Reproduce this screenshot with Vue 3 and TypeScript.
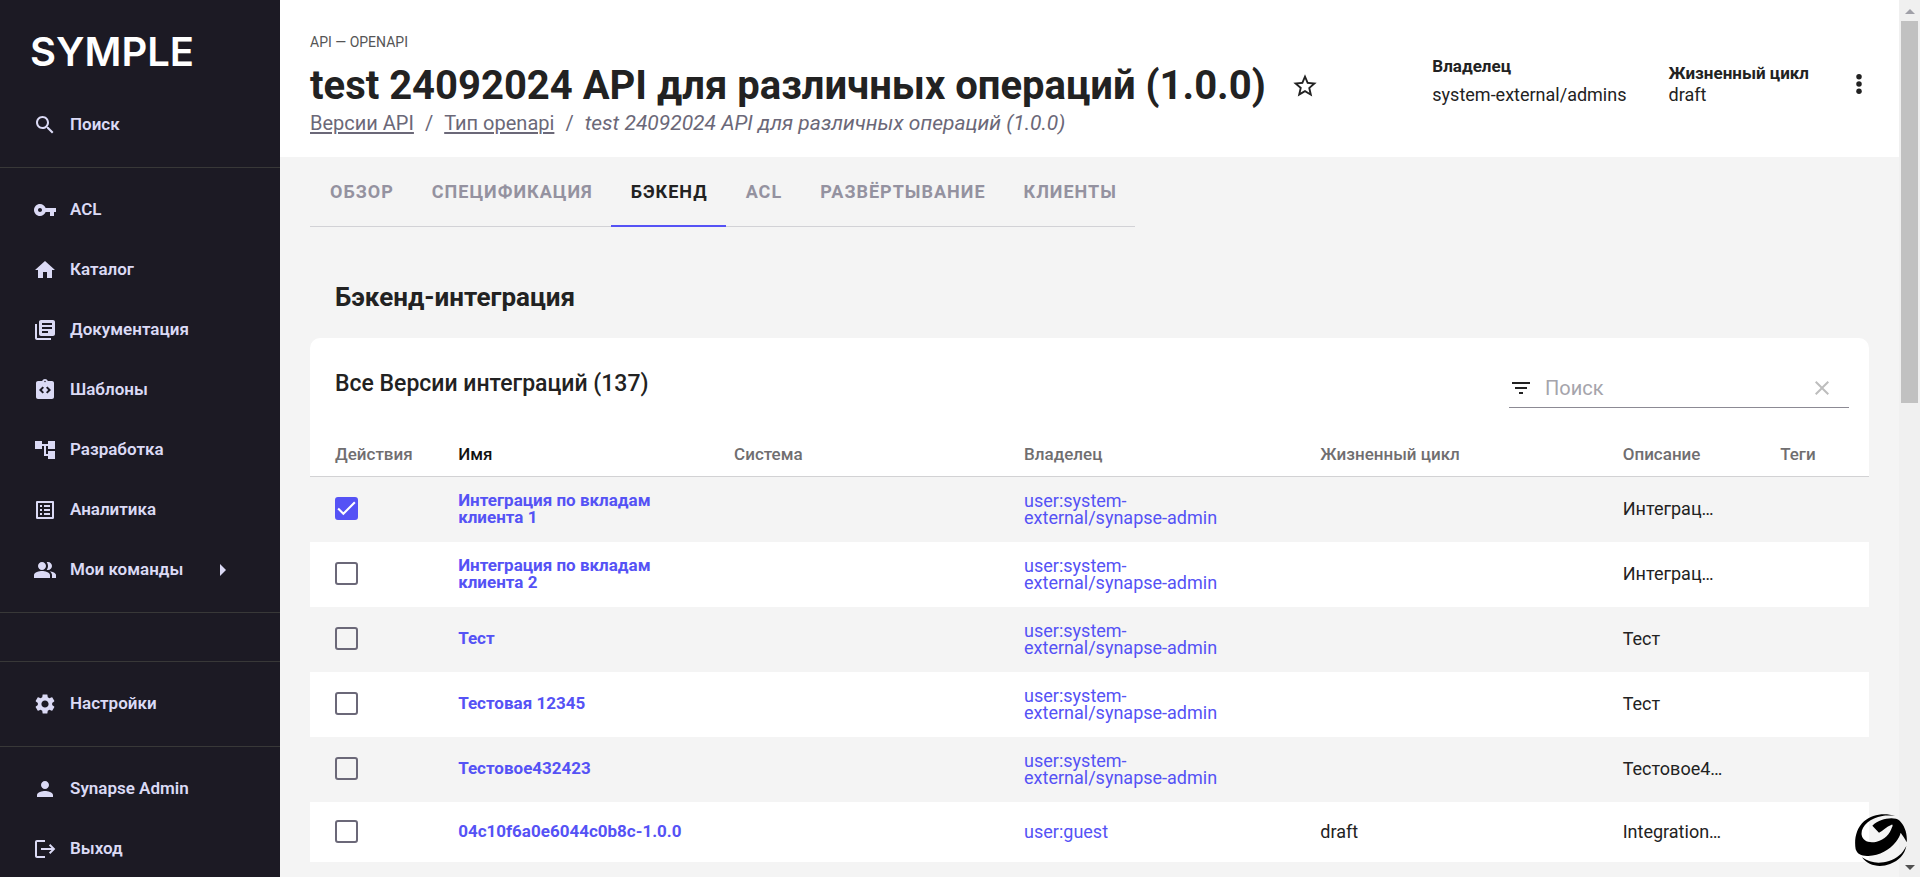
<script setup lang="ts">
import { ref } from 'vue'

interface NavItem {
  label: string
  icon: string
  submenu?: boolean
}

interface Row {
  name: string
  owner: string
  lifecycle: string
  description: string
  checked: boolean
}

const icons = {
  search:
    'M15.5 14h-.79l-.28-.27C15.41 12.59 16 11.11 16 9.5 16 5.91 13.09 3 9.5 3S3 5.91 3 9.5 5.91 16 9.5 16c1.61 0 3.09-.59 4.23-1.57l.27.28v.79l5 4.99L20.49 19l-4.99-5zm-6 0C7.01 14 5 11.99 5 9.5S7.01 5 9.5 5 14 7.01 14 9.5 11.99 14 9.5 14z',
  key: 'M12.65 10C11.83 7.67 9.61 6 7 6c-3.31 0-6 2.69-6 6s2.69 6 6 6c2.61 0 4.83-1.67 5.65-4H17v4h4v-4h2v-4H12.65zM7 14c-1.1 0-2-.9-2-2s.9-2 2-2 2 .9 2 2-.9 2-2 2z',
  home: 'M10 20v-6h4v6h5v-8h3L12 3 2 12h3v8z',
  docs: 'M4 6H2v14c0 1.1.9 2 2 2h14v-2H4V6zm16-4H8c-1.1 0-2 .9-2 2v12c0 1.1.9 2 2 2h12c1.1 0 2-.9 2-2V4c0-1.1-.9-2-2-2zm-1 9H9V9h10v2zm-4 4H9v-2h6v2zm4-8H9V5h10v2z',
  templates:
    'M19 3h-4.18C14.4 1.84 13.3 1 12 1s-2.4.84-2.82 2H5c-1.1 0-2 .9-2 2v14c0 1.1.9 2 2 2h14c1.1 0 2-.9 2-2V5c0-1.1-.9-2-2-2zm-8 11.17L9.59 15.6 6 12l3.59-3.6L11 9.83 8.83 12 11 14.17zM12 4.25c-.41 0-.75-.34-.75-.75s.34-.75.75-.75.75.34.75.75-.34.75-.75.75zm2.41 11.35L13 14.17 15.17 12 13 9.83l1.41-1.43L18 12l-3.59 3.6z',
  tree: 'M22 11V3h-7v3H9V3H2v8h7V8h2v10h4v3h7v-8h-7v3h-2V8h2v3z',
  list: 'M19 5v14H5V5h14m1.1-2H3.9c-.5 0-.9.4-.9.9v16.2c0 .4.4.9.9.9h16.2c.4 0 .9-.5.9-.9V3.9c0-.5-.5-.9-.9-.9zM11 7h6v2h-6V7zm0 4h6v2h-6v-2zm0 4h6v2h-6v-2zM7 7h2v2H7V7zm0 4h2v2H7v-2zm0 4h2v2H7v-2z',
  people:
    'M16.67 13.13C18.04 14.06 19 15.32 19 17v3h4v-3c0-2.18-3.57-3.47-6.33-3.87zM15 12c2.21 0 4-1.79 4-4s-1.79-4-4-4c-.47 0-.91.1-1.33.24C14.5 5.27 15 6.58 15 8s-.5 2.73-1.33 3.76c.42.14.86.24 1.33.24zM9 12c2.21 0 4-1.79 4-4s-1.79-4-4-4-4 1.79-4 4 1.79 4 4 4zm0 1c-2.67 0-8 1.34-8 4v3h16v-3c0-2.66-5.33-4-8-4z',
  settings:
    'M19.14 12.94c.04-.3.06-.61.06-.94 0-.32-.02-.64-.07-.94l2.03-1.58c.18-.14.23-.41.12-.61l-1.92-3.32c-.12-.22-.37-.29-.59-.22l-2.39.96c-.5-.38-1.03-.7-1.62-.94l-.36-2.54c-.04-.24-.24-.41-.48-.41h-3.84c-.24 0-.43.17-.47.41l-.36 2.54c-.59.24-1.13.57-1.62.94l-2.39-.96c-.22-.08-.47 0-.59.22L2.74 8.87c-.12.21-.08.47.12.61l2.03 1.58c-.05.3-.09.63-.09.94s.02.64.07.94l-2.03 1.58c-.18.14-.23.41-.12.61l1.92 3.32c.12.22.37.29.59.22l2.39-.96c.5.38 1.03.7 1.62.94l.36 2.54c.05.24.24.41.48.41h3.84c.24 0 .44-.17.47-.41l.36-2.54c.59-.24 1.13-.56 1.62-.94l2.39.96c.22.08.47 0 .59-.22l1.92-3.32c.12-.22.07-.47-.12-.61l-2.01-1.58zM12 15.6c-1.98 0-3.6-1.62-3.6-3.6s1.62-3.6 3.6-3.6 3.6 1.62 3.6 3.6-1.62 3.6-3.6 3.6z',
  person:
    'M12 12c2.21 0 4-1.79 4-4s-1.79-4-4-4-4 1.79-4 4 1.79 4 4 4zm0 2c-2.67 0-8 1.34-8 4v2h16v-2c0-2.66-5.33-4-8-4z',
  exit: 'M12 3H4c-1.1 0-2 .9-2 2v14c0 1.1.9 2 2 2h8v-2H4V5h8V3zm5.3 4-1.4 1.4 2.6 2.6H8v2h10.500l-2.600 2.600 1.400 1.400 5-5z',
}

const mainNav: NavItem[] = [
  { label: 'ACL', icon: icons.key },
  { label: 'Каталог', icon: icons.home },
  { label: 'Документация', icon: icons.docs },
  { label: 'Шаблоны', icon: icons.templates },
  { label: 'Разработка', icon: icons.tree },
  { label: 'Аналитика', icon: icons.list },
  { label: 'Мои команды', icon: icons.people, submenu: true },
]

const userNav: NavItem[] = [
  { label: 'Synapse Admin', icon: icons.person },
  { label: 'Выход', icon: icons.exit },
]

const title = 'test 24092024 API для различных операций (1.0.0)'
const tabs = ['Обзор', 'Спецификация', 'Бэкенд', 'ACL', 'Развёртывание', 'Клиенты']
const activeTab = ref('Бэкенд')
const query = ref('')

const columns = ['Действия', 'Имя', 'Система', 'Владелец', 'Жизненный цикл', 'Описание', 'Теги']

const admin = 'user:system-external/synapse-admin'
const rows = ref<Row[]>([
  { name: 'Интеграция по вкладам клиента 1', owner: admin, lifecycle: '', description: 'Интеграц…', checked: true },
  { name: 'Интеграция по вкладам клиента 2', owner: admin, lifecycle: '', description: 'Интеграц…', checked: false },
  { name: 'Тест', owner: admin, lifecycle: '', description: 'Тест', checked: false },
  { name: 'Тестовая 12345', owner: admin, lifecycle: '', description: 'Тест', checked: false },
  { name: 'Тестовое432423', owner: admin, lifecycle: '', description: 'Тестовое4…', checked: false },
  { name: '04c10f6a0e6044c0b8c-1.0.0', owner: 'user:guest', lifecycle: 'draft', description: 'Integration…', checked: false },
])
</script>

<template>
  <div class="app">
    <nav class="sidebar" aria-label="Основная навигация">
      <a class="logo" href="#">SYMPLE</a>
      <button class="nav-item" type="button">
        <svg class="icon" viewBox="0 0 24 24"><path :d="icons.search" /></svg>
        <span>Поиск</span>
      </button>
      <hr class="divider" />
      <a v-for="item in mainNav" :key="item.label" class="nav-item" href="#">
        <svg class="icon" viewBox="0 0 24 24"><path :d="item.icon" /></svg>
        <span>{{ item.label }}</span>
        <svg v-if="item.submenu" class="caret" viewBox="0 0 6 12"><path d="M0 0l6 6-6 6z" /></svg>
      </a>
      <hr class="divider" />
      <div class="gap"></div>
      <hr class="divider" />
      <a class="nav-item" href="#">
        <svg class="icon" viewBox="0 0 24 24"><path :d="icons.settings" /></svg>
        <span>Настройки</span>
      </a>
      <hr class="divider" />
      <a v-for="item in userNav" :key="item.label" class="nav-item" href="#">
        <svg class="icon" viewBox="0 0 24 24"><path :d="item.icon" /></svg>
        <span>{{ item.label }}</span>
      </a>
    </nav>

    <main class="page">
      <header class="header">
        <div class="heading">
          <p class="kind">API — OPENAPI</p>
          <div class="title-row">
            <h1>{{ title }}</h1>
            <button class="icon-button" type="button" aria-label="В избранное">
              <svg class="star" viewBox="0 0 24 24">
                <path d="M22 9.24l-7.190-.62L12 2 9.190 8.630 2 9.240l5.460 4.730L5.820 21 12 17.270 18.180 21l-1.630-7.030L22 9.240zM12 15.400l-3.760 2.270 1-4.280-3.320-2.880 4.380-.38L12 6.100l1.710 4.040 4.380.38-3.320 2.880 1 4.280L12 15.400z" />
              </svg>
            </button>
          </div>
          <div class="crumbs">
            <a href="#">Версии API</a>
            <span>/</span>
            <a href="#">Тип openapi</a>
            <span>/</span>
            <em>{{ title }}</em>
          </div>
        </div>
        <dl class="meta">
          <div class="meta-item spaced">
            <dt>Владелец</dt>
            <dd>system-external/admins</dd>
          </div>
          <div class="meta-item">
            <dt>Жизненный цикл</dt>
            <dd>draft</dd>
          </div>
        </dl>
        <button class="icon-button" type="button" aria-label="Меню">
          <svg class="more" viewBox="0 0 24 24">
            <circle cx="12" cy="4" r="3" /><circle cx="12" cy="12" r="3" /><circle cx="12" cy="20" r="3" />
          </svg>
        </button>
      </header>

      <div class="content">
        <div class="tabs" role="tablist">
          <button
            v-for="tab in tabs"
            :key="tab"
            type="button"
            role="tab"
            :class="['tab', { active: tab === activeTab }]"
            :aria-selected="tab === activeTab"
            @click="activeTab = tab"
          >
            {{ tab }}
          </button>
        </div>

        <h2>Бэкенд-интеграция</h2>

        <section class="card">
          <div class="toolbar">
            <h3>Все Версии интеграций (137)</h3>
            <div class="filter">
              <svg class="icon" viewBox="0 0 24 24"><path d="M10 18h4v-2h-4v2zM3 6v2h18V6H3zm3 7h12v-2H6v2z" /></svg>
              <input v-model="query" type="text" placeholder="Поиск" aria-label="Поиск" />
              <button class="icon-button clear" type="button" aria-label="Очистить" @click="query = ''">
                <svg class="icon" viewBox="0 0 24 24">
                  <path d="M19 6.410L17.590 5 12 10.590 6.410 5 5 6.410 10.590 12 5 17.590 6.410 19 12 13.410 17.590 19 19 17.590 13.410 12z" />
                </svg>
              </button>
            </div>
          </div>
          <table>
            <colgroup>
              <col class="c-actions" /><col class="c-name" /><col class="c-system" /><col class="c-owner" />
              <col class="c-life" /><col class="c-desc" /><col class="c-tags" />
            </colgroup>
            <thead>
              <tr>
                <th v-for="column in columns" :key="column" scope="col" :class="{ sorted: column === 'Имя' }">
                  {{ column }}
                </th>
              </tr>
            </thead>
            <tbody>
              <tr v-for="row in rows" :key="row.name">
                <td>
                  <label class="check">
                    <input v-model="row.checked" type="checkbox" :aria-label="row.name" />
                    <svg v-if="row.checked" class="tick" viewBox="0 0 22 22"><path d="M3 11l5 5L19 5" /></svg>
                  </label>
                </td>
                <td><a class="name" href="#">{{ row.name }}</a></td>
                <td></td>
                <td class="owner"><a href="#">{{ row.owner }}</a></td>
                <td>{{ row.lifecycle }}</td>
                <td class="nowrap">{{ row.description }}</td>
                <td></td>
              </tr>
            </tbody>
          </table>
        </section>
      </div>
    </main>

    <div class="scrollbar" aria-hidden="true">
      <svg class="arrow up" viewBox="0 0 10 5"><path d="M5 0l5 5H0z" /></svg>
      <div class="thumb"></div>
      <svg class="arrow down" viewBox="0 0 10 5"><path d="M0 0h10L5 5z" /></svg>
    </div>

    <button class="assistant" type="button" aria-label="Помощник">
      <svg viewBox="0 0 156 156">
        <path
          d="M120 6C92-4 52-1 27 22 3 44-3 77 2 106c5 15 18 21 38 20 34-2 63-18 83-43 7-9 12-18 14-27 6 10 13 17 18 29C158 58 148 34 134 20 122 9 96 12 80 18 70 22 60 27 52 35l20 21c12-6 22-18 38-24 4-1 3 4 1 8-6 19-22 38-46 43-24 5-42-2-45-20C16 38 44 12 82 6c14-2 26-1 38 0z"
        />
        <path d="M21 130c18 26 54 32 84 20 27-10 44-28 49-54-12 24-29 38-52 45-29 9-58 6-81-11z" />
      </svg>
    </button>
  </div>
</template>

<style>
body {
  margin: 0;
  overflow: hidden;
}
</style>

<style scoped>
.app {
  display: flex;
  height: 100vh;
  overflow: hidden;
  background: #f4f4f4;
  color: #222;
  font-family: Roboto, 'Noto Sans', sans-serif;
  font-size: 18px;
}

button {
  border: 0;
  padding: 0;
  background: none;
  color: inherit;
  font: inherit;
  cursor: pointer;
}

svg {
  display: block;
  flex: none;
  fill: currentColor;
}

.icon {
  width: 24px;
  height: 24px;
}

.sidebar {
  flex: none;
  width: 280px;
  background: #1c1a24;
  color: #dbdaf5;
}

.logo {
  display: block;
  height: 95px;
  box-sizing: border-box;
  padding: 28px 0 0 30px;
  color: #fff;
  font-family: Inter, sans-serif;
  font-size: 40px;
  font-weight: 600;
  line-height: 48px;
  text-decoration: none;
}

.nav-item {
  display: flex;
  align-items: center;
  width: 100%;
  height: 60px;
  box-sizing: border-box;
  padding-left: 33px;
  gap: 13px;
  color: inherit;
  font-size: 17px;
  font-weight: 600;
  text-decoration: none;
}

.nav-item span {
  padding-bottom: 2px;
}

.caret {
  width: 6px;
  height: 12px;
  margin-left: 24px;
}

.divider {
  height: 1px;
  margin: 12px 0;
  border: 0;
  background: #383838;
}

.gap {
  height: 24px;
}

.page {
  flex: 1;
  min-width: 0;
}

.header {
  display: flex;
  align-items: center;
  height: 157px;
  box-sizing: border-box;
  padding: 10px 28px 0 30px;
  background: #fff;
}

.heading {
  flex: 1;
  min-width: 0;
}

.kind {
  margin: 0;
  color: #555;
  font-size: 14px;
  line-height: 20px;
}

.title-row {
  display: flex;
  align-items: center;
  gap: 25px;
  margin-top: 10px;
}

h1 {
  margin: 0;
  font-size: 40px;
  font-weight: 700;
  line-height: 48px;
}

.star {
  width: 28px;
  height: 28px;
}

.crumbs {
  display: flex;
  align-items: baseline;
  gap: 11px;
  color: #6b6878;
  font-size: 20px;
  line-height: 26px;
}

.crumbs a {
  color: inherit;
  text-underline-offset: 2px;
}

.crumbs em {
  font-size: 21px;
}

.meta {
  display: flex;
  align-items: center;
  gap: 42px;
  margin: 0 38px 0 0;
}

dt {
  font-size: 17px;
  font-weight: 700;
  line-height: 22px;
}

dd {
  margin: 0;
  line-height: 22px;
}

.spaced {
  margin-bottom: 6px;
}

.spaced dd {
  margin-top: 7px;
}

.more {
  width: 24px;
  height: 22px;
}

.content {
  padding: 0 30px;
}

.tabs {
  display: inline-flex;
  height: 70px;
  box-sizing: border-box;
  border-bottom: 1px solid #d2d2d6;
}

.tab {
  height: 70px;
  box-sizing: border-box;
  padding: 0 18px 0 20px;
  border-bottom: 2px solid transparent;
  color: #9492a0;
  font-weight: 700;
  letter-spacing: 1px;
  text-transform: uppercase;
}

.tab.active {
  border-color: #5552f5;
  color: #222;
}

h2 {
  margin: 52px 0 23px;
  padding-left: 25px;
  font-size: 26px;
  font-weight: 700;
  line-height: 36px;
}

.card {
  border-radius: 10px 10px 0 0;
  background: #fff;
}

.toolbar {
  display: flex;
  align-items: flex-start;
  justify-content: space-between;
  padding: 29px 20px 25px 25px;
}

h3 {
  margin: 0;
  font-size: 23px;
  font-weight: 500;
  line-height: 34px;
}

.filter {
  display: flex;
  align-items: center;
  width: 340px;
  height: 41px;
  box-sizing: border-box;
  padding-top: 2px;
  border-bottom: 1px solid #8c8a94;
}

.filter input {
  flex: 1;
  min-width: 0;
  margin-left: 12px;
  padding: 0;
  border: 0;
  outline: 0;
  background: none;
  color: inherit;
  font: inherit;
  font-size: 20px;
}

.filter input::placeholder {
  color: #a5a4ab;
}

.clear {
  padding: 0 15px;
  color: #bdbdbd;
}

table {
  width: 100%;
  border-collapse: collapse;
  table-layout: fixed;
}

.c-actions { width: 7.9%; }
.c-name { width: 17.7%; }
.c-system { width: 18.6%; }
.c-owner { width: 19%; }
.c-life { width: 19.4%; }
.c-desc { width: 10.1%; }
.c-tags { width: 7.3%; }

th {
  height: 43px;
  box-sizing: border-box;
  padding: 0 0 0 25px;
  border-bottom: 1px solid #d2d2d4;
  color: #706e70;
  font-size: 17px;
  font-weight: 500;
  text-align: left;
}

th.sorted {
  color: #111;
}

td {
  height: 60px;
  box-sizing: border-box;
  padding: 15px 16px 16px 25px;
  line-height: 17px;
}

tbody tr:nth-child(odd) {
  background: #f4f4f4;
}

td a {
  display: block;
  color: #5552f5;
  text-decoration: none;
}

td.owner {
  padding-right: 40px;
}

.name {
  font-size: 17px;
  font-weight: 700;
}

.nowrap {
  white-space: nowrap;
}

.check {
  display: block;
  position: relative;
  width: 23px;
  height: 23px;
}

.check input {
  display: block;
  width: 23px;
  height: 23px;
  box-sizing: border-box;
  margin: 0;
  appearance: none;
  border: 2px solid #6b6878;
  border-radius: 3px;
}

.check input:checked {
  border-color: #5552f5;
  background: #5552f5;
}

.tick {
  position: absolute;
  inset: 0;
  fill: none;
  stroke: #fff;
  stroke-width: 2;
  pointer-events: none;
}

.scrollbar {
  display: flex;
  flex: none;
  flex-direction: column;
  align-items: center;
  width: 21px;
  box-sizing: border-box;
  padding: 9px 0 7px;
  background: #f0f0f0;
}

.arrow {
  width: 10px;
  height: 5px;
}

.up {
  color: #a0a0a8;
}

.down {
  margin-top: auto;
  color: #505050;
}

.thumb {
  width: 17px;
  height: 44.4%;
  margin-top: 7px;
  background: #c1c1c1;
}

.assistant {
  position: fixed;
  right: 13px;
  bottom: 11px;
}

.assistant svg {
  width: 52px;
  height: 52px;
  fill: #000;
}
</style>
